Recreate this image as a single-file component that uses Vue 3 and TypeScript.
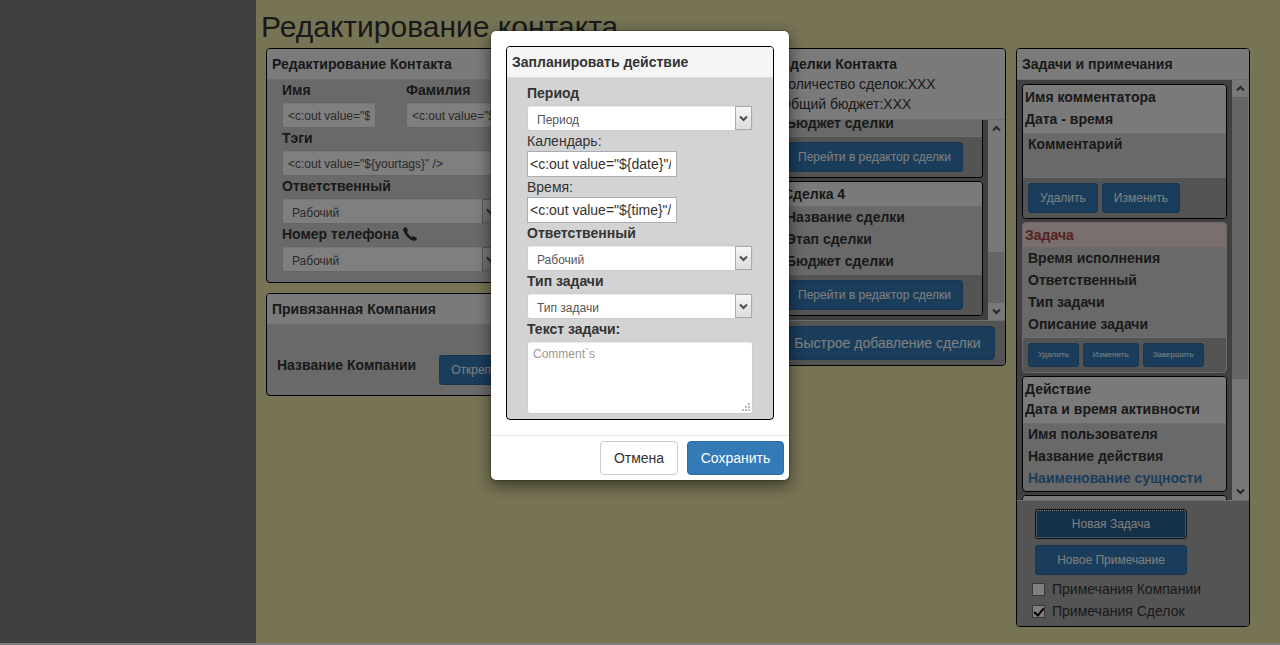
<script setup lang="ts">
import { ref } from 'vue'

interface ActivityCard {
  kind: 'note' | 'task' | 'event' | 'next'
  title: string[]
  rows: string[]
  link?: string
  actions: string[]
}

const firstName = ref('<c:out value="${firstname}" />')
const lastName = ref('<c:out value="${lastname}" />')
const tags = ref('<c:out value="${yourtags}" />')
const date = ref('<c:out value="${date}"/>')
const time = ref('<c:out value="${time}"/>')
const comment = ref('')
const companyNotes = ref(false)
const dealNotes = ref(true)

const contactSelects = [
  { id: 'owner', label: 'Ответственный', phone: false },
  { id: 'phone', label: 'Номер телефона', phone: true },
]

const deals = [
  { name: '', rows: ['Бюджет сделки'] },
  { name: 'Сделка 4', rows: ['Название сделки', 'Этап сделки', 'Бюджет сделки'] },
]

const activity: ActivityCard[] = [
  {
    kind: 'note',
    title: ['Имя комментатора', 'Дата - время'],
    rows: ['Комментарий'],
    actions: ['Удалить', 'Изменить'],
  },
  {
    kind: 'task',
    title: ['Задача'],
    rows: ['Время исполнения', 'Ответственный', 'Тип задачи', 'Описание задачи'],
    actions: ['Удалить', 'Изменить', 'Завершить'],
  },
  {
    kind: 'event',
    title: ['Действие', 'Дата и время активности'],
    rows: ['Имя пользователя', 'Название действия'],
    link: 'Наименование сущности',
    actions: [],
  },
  { kind: 'next', title: [], rows: [], actions: [] },
]
</script>

<template>
  <div class="page">
    <aside class="sidebar"></aside>
    <main class="main">
      <h1 class="title">Редактирование контакта</h1>
      <div class="columns">
        <div class="col-contact">
          <section class="panel">
            <header class="panel-head">Редактирование Контакта</header>
            <div class="contact-body">
              <div class="pair">
                <div>
                  <label for="first">Имя</label>
                  <input id="first" v-model="firstName" class="control" type="text" />
                </div>
                <div>
                  <label for="last">Фамилия</label>
                  <input id="last" v-model="lastName" class="control" type="text" />
                </div>
              </div>
              <label for="tags">Тэги</label>
              <input id="tags" v-model="tags" class="control" type="text" />
              <template v-for="item in contactSelects" :key="item.id">
                <label :for="item.id">
                  {{ item.label }}
                  <svg v-if="item.phone" class="phone" viewBox="0 0 14 14" aria-hidden="true">
                    <path d="M.6 1.300C1.200.5 2 .1 2.700 0c.3 0 .5.2.7.500l1.500 2.700c.2.3.1.6-.1.8l-.9 1c.7 1.700 2.900 4 4.900 5.200l1.200-.9c.2-.2.5-.2.8 0l2.800 1.600c.3.2.5.5.3.8-.3 1-1 1.700-1.900 2.100-.5.200-1.300.1-2-.2C5.500 11.800 1.800 8 .4 3.700.1 2.800.1 1.900.6 1.300z" />
                  </svg>
                </label>
                <span class="picker">
                  <select :id="item.id"><option>Рабочий</option></select>
                  <span class="drop" aria-hidden="true">
                    <svg viewBox="0 0 9 7"><path d="M1 1.500 4.500 5 8 1.500" /></svg>
                  </span>
                </span>
              </template>
            </div>
          </section>
          <section class="panel">
            <header class="panel-head">Привязанная Компания</header>
            <div class="company-body">
              <strong>Название Компании</strong>
              <button class="btn small" type="button">Открепить</button>
            </div>
          </section>
        </div>

        <section class="panel col-deals">
          <header class="panel-head">
            Сделки Контакта
            <p>Количество сделок:XXX</p>
            <p>Общий бюджет:XXX</p>
          </header>
          <div class="scroller deals-scroller">
            <div class="list bottom">
              <article v-for="deal in deals" :key="deal.name" class="card">
                <header v-if="deal.name" class="card-head"><h3>{{ deal.name }}</h3></header>
                <div class="card-body">
                  <p v-for="row in deal.rows" :key="row">{{ row }}</p>
                </div>
                <footer class="card-foot">
                  <button class="btn small" type="button">Перейти в редактор сделки</button>
                </footer>
              </article>
            </div>
            <div class="bar" aria-hidden="true">
              <svg viewBox="0 0 9 7"><path d="M1 5.500 4.500 2 8 5.500" /></svg>
              <div class="track low"><i></i></div>
              <svg viewBox="0 0 9 7"><path d="M1 1.500 4.500 5 8 1.500" /></svg>
            </div>
          </div>
          <footer class="panel-foot">
            <button class="btn" type="button">Быстрое добавление сделки</button>
          </footer>
        </section>

        <section class="panel col-tasks">
          <header class="panel-head">Задачи и примечания</header>
          <div class="scroller tasks-scroller">
            <div class="list">
              <article v-for="card in activity" :key="card.kind" class="card" :class="card.kind">
                <header class="card-head">
                  <h3 v-for="line in card.title" :key="line">{{ line }}</h3>
                </header>
                <div class="card-body">
                  <p v-for="row in card.rows" :key="row">{{ row }}</p>
                  <p v-if="card.link"><a href="#">{{ card.link }}</a></p>
                </div>
                <footer v-if="card.actions.length" class="card-foot">
                  <button
                    v-for="action in card.actions"
                    :key="action"
                    class="btn"
                    :class="card.kind === 'task' ? 'tiny' : 'small'"
                    type="button"
                  >{{ action }}</button>
                </footer>
              </article>
            </div>
            <div class="bar" aria-hidden="true">
              <svg viewBox="0 0 9 7"><path d="M1 5.500 4.500 2 8 5.500" /></svg>
              <div class="track high"><i></i></div>
              <svg viewBox="0 0 9 7"><path d="M1 1.500 4.500 5 8 1.500" /></svg>
            </div>
          </div>
          <footer class="tasks-foot">
            <button class="btn small active" type="button">Новая Задача</button>
            <button class="btn small" type="button">Новое Примечание</button>
            <label class="check"><input v-model="companyNotes" type="checkbox" />Примечания Компании</label>
            <label class="check"><input v-model="dealNotes" type="checkbox" />Примечания Сделок</label>
          </footer>
        </section>
      </div>
    </main>
  </div>

  <div class="backdrop">
    <div class="modal" role="dialog" aria-modal="true" aria-labelledby="plan-title">
      <div class="modal-body">
        <section class="panel">
          <header id="plan-title" class="panel-head">Запланировать действие</header>
          <div class="plan-body">
            <label for="period">Период</label>
            <span class="picker">
              <select id="period"><option>Период</option></select>
              <span class="drop" aria-hidden="true">
                <svg viewBox="0 0 9 7"><path d="M1 1.500 4.500 5 8 1.500" /></svg>
              </span>
            </span>
            <label class="plain" for="date">Календарь:</label>
            <input id="date" v-model="date" class="raw" type="text" />
            <label class="plain" for="time">Время:</label>
            <input id="time" v-model="time" class="raw" type="text" />
            <label for="plan-owner">Ответственный</label>
            <span class="picker">
              <select id="plan-owner"><option>Рабочий</option></select>
              <span class="drop" aria-hidden="true">
                <svg viewBox="0 0 9 7"><path d="M1 1.500 4.500 5 8 1.500" /></svg>
              </span>
            </span>
            <label for="kind">Тип задачи</label>
            <span class="picker">
              <select id="kind"><option>Тип задачи</option></select>
              <span class="drop" aria-hidden="true">
                <svg viewBox="0 0 9 7"><path d="M1 1.500 4.500 5 8 1.500" /></svg>
              </span>
            </span>
            <label for="text">Текст задачи:</label>
            <span class="area">
              <textarea id="text" v-model="comment" placeholder="Comment`s"></textarea>
              <svg viewBox="0 0 8 8" aria-hidden="true">
                <path d="M6 0h2v2H6zM3 3h2v2H3zM6 3h2v2H6zM0 6h2v2H0zM3 6h2v2H3zM6 6h2v2H6z" />
              </svg>
            </span>
          </div>
        </section>
      </div>
      <footer class="modal-foot">
        <button class="btn cancel" type="button">Отмена</button>
        <button class="btn save" type="button">Сохранить</button>
      </footer>
    </div>
  </div>
</template>

<style>
body {
  margin: 0;
  background: #fff;
}
</style>

<style scoped>
.page,
.backdrop {
  font: 14px/20px "Liberation Sans", Arial, sans-serif;
  color: #333;
}
.page *,
.backdrop * {
  box-sizing: border-box;
}
.page {
  display: flex;
  min-height: calc(100vh - 2px);
  margin-bottom: 2px;
}
.sidebar {
  width: 20%;
  background: #808080;
}
.main {
  flex: 1;
  min-width: 0;
  padding: 10px 30px 10px 10px;
  background: #eee8aa;
}
.title {
  margin: 0 0 5px -5px;
  font-size: 30px;
  line-height: 33px;
  font-weight: 400;
}
.columns {
  display: grid;
  grid-template-columns: 250fr 238fr 232fr 234fr;
  gap: 10px;
  align-items: start;
}
.col-contact {
  display: grid;
  gap: 10px;
}
.col-deals {
  grid-column: 3;
}
.col-contact,
.col-deals,
.col-tasks {
  min-width: 0;
}
.panel {
  border: 1px solid #000;
  border-radius: 4px;
  background: #d3d3d3;
  overflow: hidden;
}
.panel-head {
  padding: 5px;
  border-bottom: 1px solid #ddd;
  background: #f5f5f5;
  font-weight: 700;
  white-space: nowrap;
}
.panel-head p {
  margin: 0;
  font-weight: 400;
}
.contact-body {
  padding: 0 15px 10px;
}
.pair {
  display: grid;
  grid-template-columns: 1fr 1fr;
  gap: 30px;
}
label {
  display: block;
  font-weight: 700;
}
label.plain {
  font-weight: 400;
}
.control,
.picker,
.area {
  margin-top: 2px;
}
.control,
select,
textarea {
  display: block;
  width: 100%;
  height: 26px;
  border: 1px solid #ccc;
  border-radius: 3px;
  background: #fff;
  box-shadow: inset 0 1px 1px rgba(0, 0, 0, 0.075);
  color: #555;
  font: 12px/18px "Liberation Sans", Arial, sans-serif;
}
.control {
  padding: 3px 5px 1px;
}
.picker {
  display: grid;
  grid-template-columns: 1fr 18px;
}
select {
  grid-area: 1 / 1 / 2 / 3;
  appearance: none;
  padding: 3px 20px 0 9px;
}
.drop {
  grid-area: 1 / 2;
  display: flex;
  align-items: center;
  justify-content: center;
  margin: 1px 1px 1px 0;
  border: 1px solid #aaa;
  background: linear-gradient(#f6f6f6, #dcdcdc);
  pointer-events: none;
}
.drop svg,
.bar svg {
  fill: none;
  stroke: #4d4d4d;
  stroke-width: 2;
}
.drop svg {
  width: 9px;
  height: 7px;
}
.phone {
  width: 14px;
  height: 14px;
  vertical-align: -2px;
  fill: #333;
}
.company-body {
  display: flex;
  align-items: flex-start;
  gap: 23px;
  padding: 30px 10px 10px;
  white-space: nowrap;
}
.company-body .btn {
  flex: none;
}
.btn {
  height: 34px;
  padding: 6px 12px;
  border: 1px solid #2e6da4;
  border-radius: 4px;
  background: #337ab7;
  color: #fff;
  font: 14px/20px "Liberation Sans", Arial, sans-serif;
  white-space: nowrap;
}
.btn.small {
  height: 30px;
  padding: 5px 11px;
  border-radius: 3px;
  font-size: 12px;
  line-height: 18px;
}
.btn.tiny {
  height: 24px;
  padding: 2px 9px;
  border-radius: 3px;
  font-size: 8px;
  line-height: 18px;
}
.btn.active {
  border-color: #122b40;
  background: #286090;
  outline: 1px dotted #fff;
  outline-offset: -2px;
}
.btn.cancel {
  min-width: 78px;
  border-color: #ccc;
  background: #fff;
  color: #333;
}
.btn.save {
  min-width: 97px;
}
.scroller {
  display: flex;
  background: #808080;
}
.deals-scroller {
  height: 200px;
}
.tasks-scroller {
  height: 420px;
}
.list {
  flex: 1;
  min-width: 0;
  display: flex;
  flex-direction: column;
  gap: 3px;
  padding: 4px 5px;
  overflow: hidden;
}
.list.bottom {
  justify-content: flex-end;
  padding-top: 0;
}
.bottom .card:first-child {
  flex: 1;
  border-top: 0;
  border-radius: 0 0 4px 4px;
  display: flex;
  flex-direction: column;
  justify-content: flex-end;
}
.bar {
  display: flex;
  flex-direction: column;
  width: 17px;
  padding-right: 1px;
  background: #f0f0f0;
}
.bar svg {
  width: 9px;
  height: 17px;
  margin: 0 auto;
  flex: none;
}
.track {
  flex: 1;
  display: flex;
  flex-direction: column;
}
.track i {
  background: #cdcdcd;
}
.track.low {
  justify-content: flex-end;
}
.track.low i {
  height: 31%;
}
.track.high i {
  height: 73%;
}
.card {
  flex: none;
  border: 1px solid #000;
  border-radius: 4px;
  background: #d3d3d3;
  overflow: hidden;
  white-space: nowrap;
}
.card-head {
  padding: 2px;
  border-bottom: 1px solid #ddd;
  background: #f5f5f5;
}
.card h3,
.card p {
  margin: 0;
  font-size: 14px;
  line-height: 20px;
  font-weight: 700;
}
.card-body {
  padding: 0 5px 1px;
}
.card p {
  margin-bottom: 2px;
}
.note h3 {
  margin-bottom: 2px;
}
.note .card-body {
  min-height: 43px;
}
.event .card-head {
  padding-bottom: 4px;
}
.card.task {
  border-color: #ebccd1;
}
.task .card-head {
  border-color: #ebccd1;
  background: #f2dede;
  color: #a94442;
}
.next .card-head {
  min-height: 24px;
}
.card a {
  color: #337ab7;
  text-decoration: none;
}
.card-foot {
  display: flex;
  gap: 4px;
  padding: 5px;
  border-top: 1px solid #ddd;
  background: #a9a9a9;
}
.panel-foot {
  padding: 5px;
  border-top: 1px solid #ddd;
  background: #a9a9a9;
}
.panel-foot .btn {
  min-width: 215px;
}
.tasks-foot {
  display: flex;
  flex-direction: column;
  align-items: flex-start;
  padding: 8px 15px 3px;
  border-top: 1px solid #ddd;
  background: #a9a9a9;
}
.tasks-foot .btn {
  width: 152px;
  margin: 0 3px 6px;
}
.check {
  display: flex;
  align-items: center;
  gap: 7px;
  margin: 0 0 2px;
  font-weight: 400;
  white-space: nowrap;
}
.check:first-of-type {
  margin-top: -2px;
}
.check input {
  appearance: none;
  display: grid;
  place-items: center;
  width: 13px;
  height: 13px;
  margin: 0;
  border: 1px solid #707070;
  background: #fff;
}
.check input:checked::after {
  content: "";
  width: 4px;
  height: 8px;
  margin-bottom: 2px;
  border: solid #000;
  border-width: 0 2px 2px 0;
  transform: rotate(40deg);
}
.backdrop {
  position: fixed;
  inset: 0;
  overflow: hidden;
  background: rgba(0, 0, 0, 0.5);
}
.modal {
  width: 300px;
  max-width: 100%;
  margin: 30px auto;
  border: 1px solid rgba(0, 0, 0, 0.2);
  border-radius: 6px;
  background: #fff;
  background-clip: padding-box;
  box-shadow: 0 5px 15px rgba(0, 0, 0, 0.5);
}
.modal-body {
  padding: 15px;
}
.plan-body {
  padding: 5px 20px;
}
.raw {
  display: block;
  width: 150px;
  height: 26px;
  padding: 1px 5px 1px 2px;
  border: 1px solid #abadb3;
  background: #fff;
  color: #333;
  font: 14px/20px "Liberation Sans", Arial, sans-serif;
}
.area {
  display: grid;
}
.area textarea {
  grid-area: 1 / 1;
  height: 73px;
  padding: 3px 5px;
  resize: none;
}
.area textarea::placeholder {
  color: #999;
}
.area svg {
  grid-area: 1 / 1;
  place-self: end;
  width: 8px;
  height: 8px;
  margin: 3px;
  fill: #bbb;
  pointer-events: none;
}
.modal-foot {
  display: flex;
  justify-content: flex-end;
  gap: 9px;
  padding: 5px;
  border-top: 1px solid #e5e5e5;
}
</style>
